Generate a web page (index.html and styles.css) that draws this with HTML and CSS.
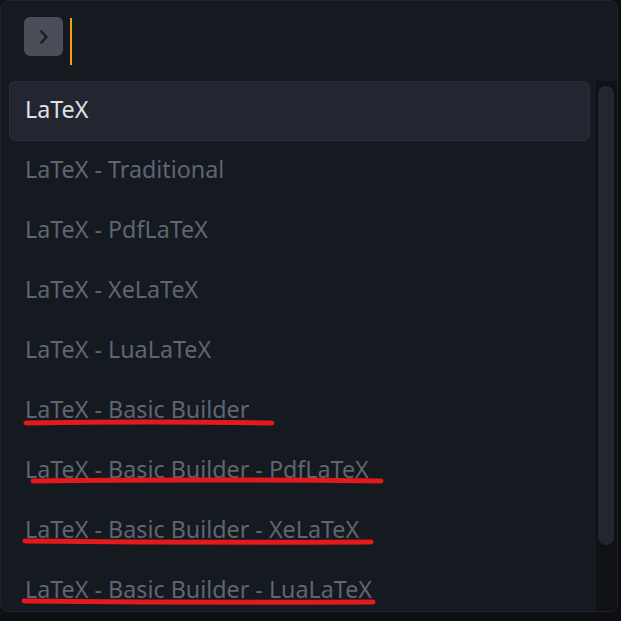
FILE: index.html
```html
<!DOCTYPE html>
<html>
<head>
<meta charset="utf-8">
<link rel="stylesheet" href="styles.css">
</head>
<body>
<div class="panel">
  <div class="header">
    <div class="btn">
      <svg width="20" height="20" viewBox="0 0 20 20"><path d="M7.5 4.5 L12.5 10 L7.5 15.5" fill="none" stroke="#1b1d23" stroke-width="2.6" stroke-linecap="round" stroke-linejoin="round"/></svg>
    </div>
    <div class="caret"></div>
  </div>
  <div class="body">
    <ul class="list">
      <li class="item selected">LaTeX</li>
      <li class="item">LaTeX - Traditional</li>
      <li class="item">LaTeX - PdfLaTeX</li>
      <li class="item">LaTeX - XeLaTeX</li>
      <li class="item">LaTeX - LuaLaTeX</li>
      <li class="item">LaTeX - Basic Builder</li>
      <li class="item">LaTeX - Basic Builder - PdfLaTeX</li>
      <li class="item">LaTeX - Basic Builder - XeLaTeX</li>
      <li class="item">LaTeX - Basic Builder - LuaLaTeX</li>
    </ul>
    <div class="scrollbar"><div class="thumb"></div></div>
  </div>
  <svg class="marks" width="621" height="621" viewBox="0 0 621 621">
    <g stroke="#e3191c" stroke-width="5" stroke-linecap="round" fill="none">
      <path d="M26 423 Q150 421 272 423"/>
      <path d="M33 481 Q200 479 381 481"/>
      <path d="M25 541 Q200 543 371 542"/>
      <path d="M24 601 Q200 603 373 602"/>
    </g>
  </svg>
</div>
</body>
</html>
```

FILE: styles.css
```css
* { box-sizing: border-box; }
html, body {
  margin: 0;
  padding: 0;
  background: #0d0f13;
  width: 621px;
  height: 621px;
  overflow: hidden;
}
.panel {
  position: relative;
  width: 618px;
  height: 612px;
  background: #151920;
  border: 1px solid #1f232b;
  border-radius: 8px;
  font-family: "Noto Sans", "Open Sans", sans-serif;
  overflow: hidden;
}
.header {
  height: 80px;
  display: flex;
  align-items: flex-start;
  padding: 16px 0 0 23px;
}
.btn {
  width: 39px;
  height: 39px;
  background: #4b4e58;
  border-radius: 6px;
  display: flex;
  align-items: center;
  justify-content: center;
}
.caret {
  width: 2px;
  height: 47px;
  background: #f2a20c;
  margin: 1px 0 0 7px;
}
.body {
  display: flex;
  padding-left: 8px;
  gap: 6px;
}
.list {
  list-style: none;
  margin: 0;
  padding: 0;
  width: 581px;
}
.item {
  height: 60px;
  display: flex;
  align-items: center;
  padding: 0 0 4px 15px;
  font-size: 23.3px;
  color: #5f6571;
  border: 1px solid transparent;
  border-radius: 6px;
  white-space: nowrap;
}
.item.selected {
  background: #232631;
  border-color: #2c2f3a;
  color: #dfe1e5;
}
.scrollbar {
  width: 21px;
  height: 530px;
  background: #0f1116;
  padding: 5px 3px 0 2px;
}
.thumb {
  width: 16px;
  height: 459px;
  background: #23262f;
  border-radius: 8px;
}
.marks {
  position: absolute;
  left: -1px;
  top: -1px;
  pointer-events: none;
}
```
